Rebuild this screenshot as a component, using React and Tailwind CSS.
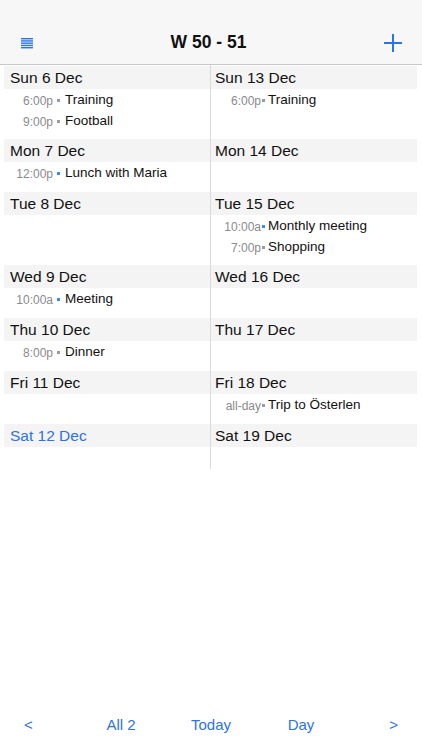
import React from "react";

const left = [
  { d: "Sun 6 Dec", ev: [["6:00p", "Training", "g"], ["9:00p", "Football", "g"]] },
  { d: "Mon 7 Dec", ev: [["12:00p", "Lunch with Maria", "b"]] },
  { d: "Tue 8 Dec", ev: [] },
  { d: "Wed 9 Dec", ev: [["10:00a", "Meeting", "b"]] },
  { d: "Thu 10 Dec", ev: [["8:00p", "Dinner", "g"]] },
  { d: "Fri 11 Dec", ev: [] },
  { d: "Sat 12 Dec", ev: [], today: true },
];
const right = [
  { d: "Sun 13 Dec", ev: [["6:00p", "Training", "g"]] },
  { d: "Mon 14 Dec", ev: [] },
  { d: "Tue 15 Dec", ev: [["10:00a", "Monthly meeting", "b"], ["7:00p", "Shopping", "g"]] },
  { d: "Wed 16 Dec", ev: [] },
  { d: "Thu 17 Dec", ev: [] },
  { d: "Fri 18 Dec", ev: [["all-day", "Trip to Österlen", "g"]] },
  { d: "Sat 19 Dec", ev: [] },
];

function areaClass(i) {
  if (i === 6) return "h-[22px] pt-[1px]";
  const n = Math.max(left[i].ev.length, right[i].ev.length);
  return n >= 2 ? "h-[50px] pt-[1px]" : "h-[30px] pt-[1px]";
}

function Column({ days, side }) {
  const isLeft = side === "l";
  return (
    <div className={isLeft ? "w-[207px] border-r border-[#dadada] pt-[1px]" : "flex-1 pt-[1px]"}>
      {days.map((day, i) => (
        <div key={day.d}>
          <div
            className={
              (isLeft ? "pl-[6px] " : "pl-[4px] ") +
              "h-[23px] flex items-center pt-[1px] bg-[#f4f4f4] text-[15.5px] " +
              (day.today ? "text-[#2e72e8]" : "text-[#111]")
            }
          >
            {day.d}
          </div>
          <div className={areaClass(i)}>
            {day.ev.map(([t, name, c]) => (
              <div key={name} className="h-[21px] flex items-center">
                <span
                  className={
                    (isLeft ? "w-[49px]" : "w-[50px]") +
                    " text-right text-[12px] text-[#8a8a8e] shrink-0"
                  }
                >
                  {t}
                </span>
                <span
                  className={
                    (isLeft ? "ml-[4px]" : "ml-[1px]") +
                    " w-[3px] h-[3px] shrink-0 " +
                    (c === "b" ? "bg-[#3a8ee6]" : "bg-[#9a9aa0]")
                  }
                />
                <span
                  className={
                    (isLeft ? "ml-[5px]" : "ml-[3px]") +
                    " text-[13.5px] text-[#111] whitespace-nowrap"
                  }
                >
                  {name}
                </span>
              </div>
            ))}
          </div>
        </div>
      ))}
    </div>
  );
}

export default function App() {
  return (
    <div
      className="w-[422px] h-[750px] bg-white flex flex-col overflow-hidden"
      style={{ fontFamily: '"Liberation Sans", Arial, sans-serif' }}
    >
      <div className="h-[65px] bg-[#f7f7f7] border-b border-[#c8c8c8] shrink-0 flex flex-col">
        <div className="h-[21px]" />
        <div className="h-[43px] flex items-center justify-between px-[21px]">
          <svg width="12" height="11" viewBox="0 0 12 11" className="mt-[1px]">
            {[0, 2.25, 4.5, 6.75, 9].map((y) => (
              <rect key={y} x="0" y={y} width="12" height="1.4" fill="#2e72e8" />
            ))}
          </svg>
          <div className="text-[17.5px] font-bold text-[#111]">W 50 - 51</div>
          <svg width="18" height="18" viewBox="0 0 18 18" className="mr-[-1px]">
            <rect x="8" y="0" width="2" height="18" fill="#2e72e8" />
            <rect x="0" y="8" width="18" height="2" fill="#2e72e8" />
          </svg>
        </div>
      </div>
      <div className="flex pl-[4px] pr-[5px]">
        <Column days={left} side="l" />
        <Column days={right} side="r" />
      </div>
      <div className="flex-1" />
      <div className="h-[44px] mb-[3px] grid grid-cols-[1fr_90px_90px_90px_1fr] items-center text-[15px] text-[#2e72e8] shrink-0">
        <div className="pl-[24px]">&lt;</div>
        <div className="text-center">All 2</div>
        <div className="text-center">Today</div>
        <div className="text-center">Day</div>
        <div className="text-right pr-[24px]">&gt;</div>
      </div>
    </div>
  );
}
